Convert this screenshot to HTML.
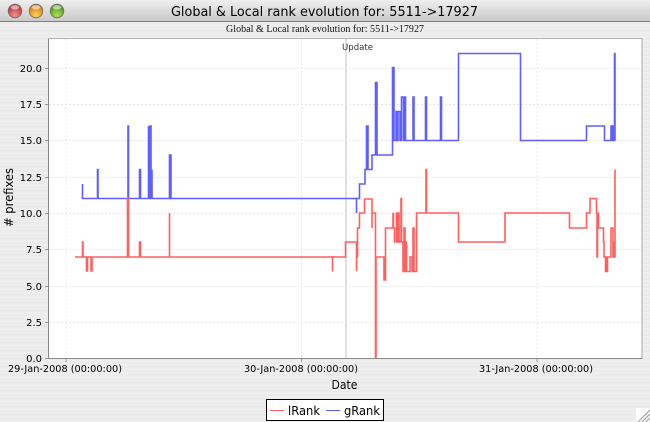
<!DOCTYPE html>
<html><head><meta charset="utf-8">
<style>
html,body{margin:0;padding:0;background:#000}
svg{display:block}
</style></head><body>
<svg xmlns="http://www.w3.org/2000/svg" width="650" height="422" viewBox="0 0 650 422">
<defs>
<linearGradient id="tb" x1="0" y1="0" x2="0" y2="1"><stop offset="0" stop-color="#efefef"/><stop offset="1" stop-color="#c8c8c8"/></linearGradient>
<radialGradient id="r" cx=".5" cy=".8" r=".75"><stop offset="0" stop-color="#f29292"/><stop offset="1" stop-color="#b02a2e"/></radialGradient>
<radialGradient id="y" cx=".5" cy=".8" r=".75"><stop offset="0" stop-color="#ffd458"/><stop offset="1" stop-color="#cc7410"/></radialGradient>
<radialGradient id="g" cx=".5" cy=".8" r=".75"><stop offset="0" stop-color="#aee454"/><stop offset="1" stop-color="#4a8a1a"/></radialGradient>
<pattern id="stripe" width="4" height="4" patternUnits="userSpaceOnUse"><rect width="4" height="2" fill="#eeeeee"/><rect y="2" width="4" height="2" fill="#ebebeb"/></pattern>
</defs>
<rect width="650" height="422" fill="url(#stripe)"/>
<path d="M0 22V6Q0 0 6 0H644Q650 0 650 6V22Z" fill="url(#tb)"/>
<rect y="21" width="650" height="1" fill="#7f7f7f"/>
<circle cx="15" cy="11" r="6.8" fill="url(#r)" stroke="#6f6f6f" stroke-width=".8"/>
<circle cx="36" cy="11" r="6.8" fill="url(#y)" stroke="#6f6f6f" stroke-width=".8"/>
<circle cx="57" cy="11" r="6.8" fill="url(#g)" stroke="#6f6f6f" stroke-width=".8"/>
<ellipse cx="15" cy="7.3" rx="4.2" ry="2.2" fill="#fff" opacity=".55"/>
<ellipse cx="36" cy="7.3" rx="4.2" ry="2.2" fill="#fff" opacity=".55"/>
<ellipse cx="57" cy="7.3" rx="4.2" ry="2.2" fill="#fff" opacity=".55"/>
<text x="171" y="16" font-family="'DejaVu Sans',sans-serif" font-size="13" fill="#000" textLength="307" lengthAdjust="spacingAndGlyphs">Global &amp; Local rank evolution for: 5511-&gt;17927</text>
<text x="226" y="32" font-family="'Liberation Serif',serif" font-size="10" fill="#111" textLength="198" lengthAdjust="spacing">Global &amp; Local rank evolution for: 5511-&gt;17927</text>

<rect x="49" y="39" width="593" height="319" fill="#fff"/>
<g stroke="#e6e6e6" stroke-width="1" stroke-dasharray="2 2" fill="none">
<path d="M49 68.5H642M49 104.5H642M49 140.5H642M49 177.5H642M49 213.5H642M49 249.5H642M49 286.5H642M49 322.5H642"/>
<path d="M66 39V358M301.5 39V358M537 39V358" stroke="#e8e8e8"/>
</g>
<rect x="345" y="39" width="2" height="319" fill="#e0e0e0"/>
<text x="342" y="50" font-family="'DejaVu Sans',sans-serif" font-size="8.5" fill="#333" textLength="31" lengthAdjust="spacingAndGlyphs">Update</text>

<path fill="none" stroke="#5f5fff" stroke-width="1.6" d="M82.5 184V198.5H97.5V169.5H98V198.5H128V126H128.5V198.5H139.5V169.5H140.5V198.5H148.5V126V198.5H150V126H151V198.5H152V169.5V198.5H169.5V155H171V198.5H356.5V213V198.5H359.5V184H365V169.5H366.5V126H368V169.5H372V155H375.5V82.5H377V111.5V155H392.5V67.5H394V140.5H396V111.5H397.5V140.5H398V111.5H400V140.5H401.5V97H403.5V140.5H404.5V97H405.5V140.5H413V97H414V140.5H425.5V97H426.5V140.5H440.5V97H441.5V140.5H458.5V53.5H520.5V140.5H586.5V126H604.5V140.5H611V126H612.5V140.5H613V126H613.5V140.5H614.5V53.5H615V140.5"/>

<path fill="none" stroke="#ff5f5f" stroke-width="1.6" d="M75 257H82.5V242H83V257H86.5V271H87.5V257H91V271H92V257H127.5V198.5H128.5V257H139.5V242H140.5V257H169.5V213V257H332.5V271.5V257H345.5V242H356.5V271V257H357.5V228H359.5V213H364.5V199H372V228V213H375.5V358H376V257H384V280H385.5V228H393V213.5H393.5V228H394.5V242H396.5V213H397V242H398V213H399V242H401V198.5H401.5V242H403V271.5H404V228H405V271.5H406V242H406.5V271.5H410V257H412V271.5H413V228H414V271.5H416.5V213H426V169.5H426.5V213H458.5V242H505V213H569.5V228H586.5V213H590V198.5H596.5V213H597V257H597.5V213H598.5V228H603.5V242H604V257H605.5V271.5H606.5V257H607V271.5H607.5V257H611V228H613V257H613.5V242H614.5V257H615V169.5V257"/>

<rect x="48" y="38" width="1" height="320.5" fill="#8a8a8a"/>
<rect x="48" y="38" width="594" height="1" fill="#b4b4b4"/>
<rect x="641.5" y="38" width="1" height="321" fill="#a8a8a8"/>
<rect x="48" y="358" width="594.5" height="1" fill="#8a8a8a"/>
<path d="M45 68.5H48M45 104.5H48M45 140.5H48M45 177.5H48M45 213.5H48M45 249.5H48M45 286.5H48M45 322.5H48M45 358.5H48M66 359V362M301.5 359V362M537 359V362" stroke="#999" stroke-width="1" fill="none"/>

<g font-family="'DejaVu Sans',sans-serif" font-size="10" fill="#000">
<g text-anchor="end">
<text x="42" y="72">20.0</text><text x="42" y="108">17.5</text><text x="42" y="144">15.0</text><text x="42" y="181">12.5</text><text x="42" y="217">10.0</text><text x="42" y="253">7.5</text><text x="42" y="290">5.0</text><text x="42" y="326">2.5</text><text x="42" y="362">0.0</text>
</g>
<text x="8" y="372" textLength="114" lengthAdjust="spacingAndGlyphs">29-Jan-2008 (00:00:00)</text>
<text x="244" y="372" textLength="114" lengthAdjust="spacingAndGlyphs">30-Jan-2008 (00:00:00)</text>
<text x="479" y="372" textLength="114" lengthAdjust="spacingAndGlyphs">31-Jan-2008 (00:00:00)</text>
<text x="331.5" y="389" font-size="12" textLength="26" lengthAdjust="spacingAndGlyphs">Date</text>
<text transform="translate(13 227) rotate(-90)" font-size="12" textLength="59" lengthAdjust="spacingAndGlyphs"># prefixes</text>
</g>

<rect x="266.5" y="399.5" width="117" height="21" fill="#fff" stroke="#000" stroke-width="1"/>
<path d="M270 410.5H284" stroke="#ff5a5a" stroke-width="1"/>
<path d="M326 410.5H340" stroke="#5a5aff" stroke-width="1"/>
<g font-family="'DejaVu Sans',sans-serif" font-size="12" fill="#000">
<text x="288" y="415" textLength="32" lengthAdjust="spacingAndGlyphs">lRank</text>
<text x="344" y="415" textLength="36" lengthAdjust="spacingAndGlyphs">gRank</text>
</g>

<path d="M636 422V408H650V422Z" fill="#fff" opacity=".85"/>
<path d="M638 422L650 410M642 422L650 414M646 422L650 418" stroke="#999" stroke-width="1" fill="none"/>
</svg>
</body></html>
